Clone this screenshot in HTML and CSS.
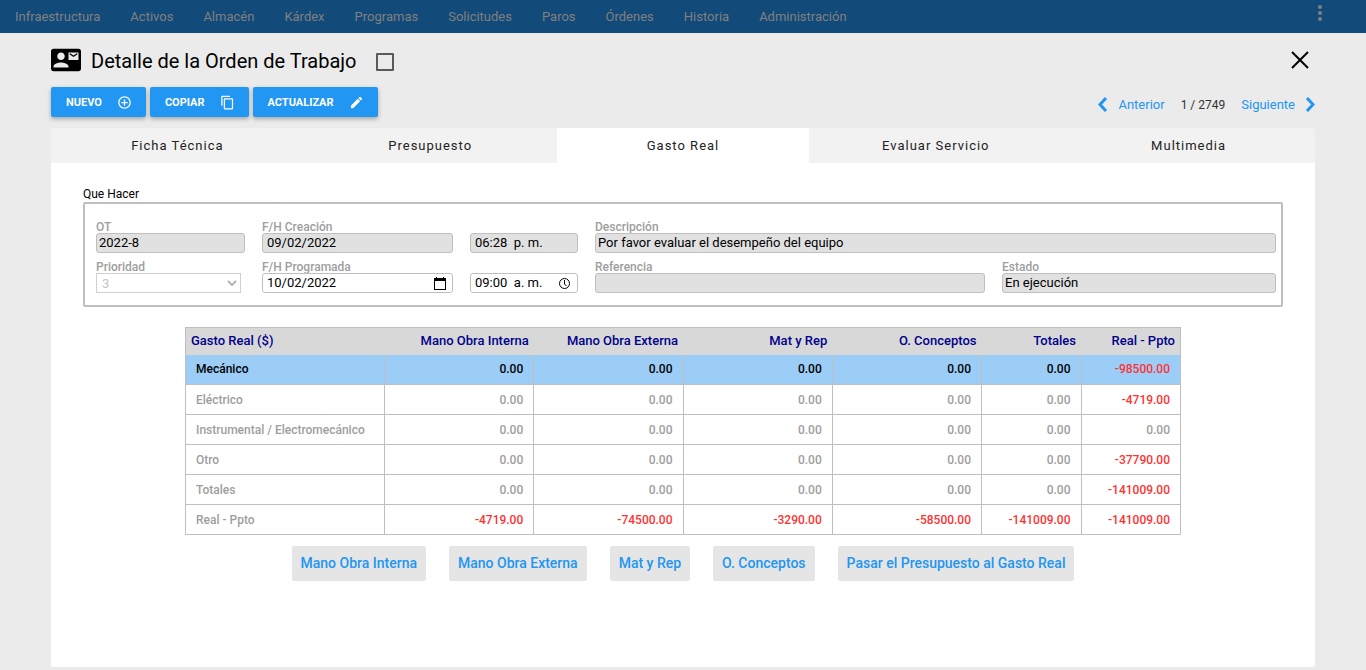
FILE: index.html
```html
<!DOCTYPE html>
<html lang="es">
<head>
    <meta charset="UTF-8">
    <meta name="viewport" content="width=device-width, initial-scale=1.0">
    <title>Detalle de la Orden de Trabajo</title>
    <link rel="stylesheet" href="styles.css">
</head>
<body>
    <nav class="navbar">
        <a href="#">Infraestructura</a>
        <a href="#">Activos</a>
        <a href="#">Almacén</a>
        <a href="#">Kárdex</a>
        <a href="#">Programas</a>
        <a href="#">Solicitudes</a>
        <a href="#">Paros</a>
        <a href="#">Órdenes</a>
        <a href="#">Historia</a>
        <a href="#">Administración</a>
        <button class="more" type="button" aria-label="Más opciones">
            <svg width="24" height="24" viewBox="0 0 24 24"><path d="M12 8c1.1 0 2-.9 2-2s-.9-2-2-2-2 .9-2 2 .9 2 2 2zm0 2c-1.1 0-2 .9-2 2s.9 2 2 2 2-.9 2-2-.9-2-2-2zm0 6c-1.1 0-2 .9-2 2s.9 2 2 2 2-.9 2-2-.9-2-2-2z"/></svg>
        </button>
    </nav>

    <main class="page">
        <header class="title">
            <svg width="30" height="30" viewBox="0 0 24 24"><path d="M22 3H2C.9 3 0 3.900 0 5v14c0 1.100.9 2 2 2h20c1.100 0 1.990-.9 1.990-2L24 5c0-1.100-.9-2-2-2zM8 6c1.660 0 3 1.340 3 3s-1.340 3-3 3-3-1.340-3-3 1.340-3 3-3zm6 12H2v-1c0-2 4-3.100 6-3.100s6 1.100 6 3.100v1zm8-6h-8V6h8v6z"/><path d="M15 7l3 2 3-2" fill="none" stroke="#000"/></svg>
            <h1>Detalle de la Orden de Trabajo</h1>
            <input class="check" type="checkbox" aria-label="Marcar orden">
            <button class="close" type="button" aria-label="Cerrar">
                <svg width="18" height="18" viewBox="0 0 18 18"><path d="M1 1l16 16M17 1L1 17"/></svg>
            </button>
        </header>

        <div class="toolbar">
            <button class="btn" type="button">NUEVO
                <svg width="15" height="15" viewBox="0 0 24 24"><path d="M13 7h-2v4H7v2h4v4h2v-4h4v-2h-4V7zm-1-5C6.480 2 2 6.480 2 12s4.480 10 10 10 10-4.480 10-10S17.520 2 12 2zm0 18c-4.410 0-8-3.590-8-8s3.590-8 8-8 8 3.590 8 8-3.590 8-8 8z"/></svg>
            </button>
            <button class="btn" type="button">COPIAR
                <svg width="15" height="15" viewBox="0 0 24 24"><path d="M16 1H4c-1.100 0-2 .9-2 2v14h2V3h12V1zm3 4H8c-1.100 0-2 .9-2 2v14c0 1.100.9 2 2 2h11c1.100 0 2-.9 2-2V7c0-1.100-.9-2-2-2zm0 16H8V7h11v14z"/></svg>
            </button>
            <button class="btn" type="button">ACTUALIZAR
                <svg width="15" height="15" viewBox="0 0 24 24"><path d="M3 17.250V21h3.750L17.810 9.940l-3.750-3.750L3 17.250zM20.710 7.040c.39-.39.39-1.020 0-1.410l-2.340-2.340c-.39-.39-1.020-.39-1.410 0l-1.830 1.830 3.750 3.750 1.830-1.830z"/></svg>
            </button>
            <div class="pager">
                <a href="#">
                    <svg width="10" height="15" viewBox="0 0 10 15"><path d="M8 1L2 7.500L8 14"/></svg>
                    Anterior
                </a>
                <span>1 / 2749</span>
                <a href="#">
                    Siguiente
                    <svg width="10" height="15" viewBox="0 0 10 15"><path d="M2 1L8 7.500L2 14"/></svg>
                </a>
            </div>
        </div>

        <div class="tabs" role="tablist">
            <button type="button" role="tab">Ficha Técnica</button>
            <button type="button" role="tab">Presupuesto</button>
            <button class="on" type="button" role="tab" aria-selected="true">Gasto Real</button>
            <button type="button" role="tab">Evaluar Servicio</button>
            <button type="button" role="tab">Multimedia</button>
        </div>

        <section class="panel">
            <h2>Que Hacer</h2>
            <form class="fields">
                <div class="field">
                    <label for="ot">OT</label>
                    <input id="ot" type="text" value="2022-8" readonly>
                </div>
                <div class="field picker">
                    <label for="fecha_creacion">F/H Creación</label>
                    <input id="fecha_creacion" type="text" value="09/02/2022" readonly>
                </div>
                <div class="field picker">
                    <input type="text" value="06:28  p. m." aria-label="Hora de creación" readonly>
                </div>
                <div class="field wide">
                    <label for="descripcion">Descripción</label>
                    <input id="descripcion" type="text" value="Por favor evaluar el desempeño del equipo" readonly>
                </div>
                <div class="field">
                    <label for="prioridad">Prioridad</label>
                    <div class="select">
                        <select id="prioridad" disabled>
                            <option>3</option>
                        </select>
                        <svg width="10" height="6" viewBox="0 0 10 6"><path d="M1 1l4 4 4-4"/></svg>
                    </div>
                </div>
                <div class="field picker">
                    <label for="fecha_programada">F/H Programada</label>
                    <div class="box">
                        <input id="fecha_programada" type="text" value="10/02/2022">
                        <button type="button" aria-label="Elegir fecha">
                            <svg width="12" height="13" viewBox="0 0 12 13"><path d="M2 0h1v1h6V0h1v1h2v12H0V1h2zM1 4v8h10V4z" fill-rule="evenodd"/></svg>
                        </button>
                    </div>
                </div>
                <div class="field picker">
                    <div class="box">
                        <input type="text" value="09:00  a. m." aria-label="Hora programada">
                        <button type="button" aria-label="Elegir hora">
                            <svg class="clock" width="13" height="13" viewBox="0 0 13 13"><circle cx="6.500" cy="6.500" r="5"/><path d="M6.500 3v4l2 2"/></svg>
                        </button>
                    </div>
                </div>
                <div class="field">
                    <label for="referencia">Referencia</label>
                    <input id="referencia" type="text" readonly>
                </div>
                <div class="field">
                    <label for="estado">Estado</label>
                    <input id="estado" type="text" value="En ejecución" readonly>
                </div>
            </form>

            <table class="costs">
                <colgroup>
                    <col class="name">
                    <col class="cost">
                    <col class="cost">
                    <col class="cost">
                    <col class="cost">
                    <col class="total">
                    <col class="total">
                </colgroup>
                <thead>
                    <tr><th>Gasto Real ($)</th><th>Mano Obra Interna</th><th>Mano Obra Externa</th><th>Mat y Rep</th><th>O. Conceptos</th><th>Totales</th><th>Real - Ppto</th></tr>
                </thead>
                <tbody>
                    <tr class="selected"><td>Mecánico</td><td>0.00</td><td>0.00</td><td>0.00</td><td>0.00</td><td>0.00</td><td class="neg">-98500.00</td></tr>
                    <tr><td>Eléctrico</td><td>0.00</td><td>0.00</td><td>0.00</td><td>0.00</td><td>0.00</td><td class="neg">-4719.00</td></tr>
                    <tr><td>Instrumental / Electromecánico</td><td>0.00</td><td>0.00</td><td>0.00</td><td>0.00</td><td>0.00</td><td>0.00</td></tr>
                    <tr><td>Otro</td><td>0.00</td><td>0.00</td><td>0.00</td><td>0.00</td><td>0.00</td><td class="neg">-37790.00</td></tr>
                    <tr><td>Totales</td><td>0.00</td><td>0.00</td><td>0.00</td><td>0.00</td><td>0.00</td><td class="neg">-141009.00</td></tr>
                    <tr><td>Real - Ppto</td><td class="neg">-4719.00</td><td class="neg">-74500.00</td><td class="neg">-3290.00</td><td class="neg">-58500.00</td><td class="neg">-141009.00</td><td class="neg">-141009.00</td></tr>
                </tbody>
            </table>

            <div class="actions">
                <button type="button">Mano Obra Interna</button>
                <button type="button">Mano Obra Externa</button>
                <button type="button">Mat y Rep</button>
                <button type="button">O. Conceptos</button>
                <button type="button">Pasar el Presupuesto al Gasto Real</button>
            </div>
        </section>
    </main>
</body>
</html>
```
FILE: styles.css
```css
* {
    margin: 0;
    padding: 0;
    box-sizing: border-box;
}
body {
    display: flex;
    flex-direction: column;
    min-height: 100vh;
    background-color: #ebebeb;
    color: #000;
    font-family: Roboto, "Liberation Sans", sans-serif;
    font-size: 13px;
}
a {
    text-decoration: none;
}
button {
    border: none;
    background: none;
    font-family: inherit;
    cursor: pointer;
}
svg {
    display: block;
    flex: none;
}

/* barra superior */
.navbar {
    display: flex;
    align-items: center;
    gap: 30px;
    height: 33px;
    padding: 0 34px 0 15px;
    background-color: #124a79;
}
.navbar a {
    color: #808080;
}
.navbar .more {
    margin-left: auto;
    padding-bottom: 7px;
    fill: #808080;
}

.page {
    display: flex;
    flex: 1;
    flex-direction: column;
    padding: 10px 51px 3px;
}
.title {
    display: flex;
    align-items: center;
    height: 34px;
}
.title h1 {
    margin: 2px 20px 0 10px;
    font-size: 20px;
    font-weight: 400;
}
.title .check {
    appearance: none;
    width: 18px;
    height: 18px;
    margin-top: 4px;
    border: 2px solid #5a5a5a;
    border-radius: 1px;
}
.title .close {
    margin: 0 6px 0 auto;
}
.close svg {
    fill: none;
    stroke: #000;
    stroke-width: 2;
}

/* botones y paginador */
.toolbar {
    display: flex;
    gap: 4px;
    margin: 10px 0 11px;
}
.btn {
    display: flex;
    align-items: center;
    gap: 15px;
    height: 30px;
    padding: 0 14px 0 15px;
    border-radius: 2px;
    background-color: #2196f3;
    box-shadow: 0 2px 4px rgba(0,0,0,0.3);
    color: #fff;
    font-size: 11px;
    font-weight: 700;
}
.btn svg {
    fill: #fff;
}
.pager {
    display: flex;
    align-items: center;
    gap: 16px;
    margin-left: auto;
    padding-top: 5px;
    color: #333;
}
.pager span {
    font-size: 12px;
}
.pager a {
    display: flex;
    align-items: center;
    gap: 10px;
    color: #2196f3;
}
.pager svg {
    fill: none;
    stroke: #2196f3;
    stroke-width: 3;
}

.tabs {
    display: flex;
    overflow: hidden;
    border-radius: 3px 3px 0 0;
    background-color: #f2f2f2;
}
.tabs button {
    flex: 1;
    height: 35px;
    color: #222;
    font-size: 13px;
    letter-spacing: 1px;
}
.tabs .on {
    background-color: #fff;
}

.panel {
    flex: 1;
    padding: 23px 32px;
    border-radius: 0 0 3px 3px;
    background-color: #fff;
}
.panel h2 {
    font-size: 12px;
    font-weight: 400;
    line-height: 16px;
}
.fields {
    display: grid;
    grid-template-columns: 149fr 191fr 108fr 390fr 274fr;
    align-items: end;
    gap: 8px 17px;
    padding: 17px 5px 12px 11px;
    border: 2px solid #bfbfbf;
    border-radius: 2px;
}
.field {
    display: flex;
    flex-direction: column;
    min-width: 0;
}
.wide {
    grid-column: span 2;
}
.field label {
    color: #9e9e9e;
    font-size: 12px;
    font-weight: 500;
    line-height: 12px;
}
.field input,
.field select,
.box {
    width: 100%;
    height: 20px;
    border: 1px solid #bfbfbf;
    border-radius: 3px;
    background-color: #fff;
    color: #000;
    font-family: inherit;
    font-size: 13px;
}
.field input {
    padding: 0 2px 2px;
    white-space: pre;
}
.picker input {
    padding: 0 4px 2px;
}
.field input:read-only {
    background-color: #e1e1e1;
}
.box {
    display: flex;
    align-items: center;
    padding-right: 6px;
}
.box input {
    height: 18px;
    border: none;
}
.box .clock {
    fill: none;
    stroke: #000;
}
.select {
    display: grid;
    align-items: center;
    margin-right: 4px;
}
.select select,
.select svg {
    grid-area: 1 / 1;
}
.select select {
    appearance: none;
    padding: 0 5px;
    border-color: #d0d0d0;
    border-radius: 0;
    color: #c4c4c4;
    opacity: 1;
}
.select svg {
    justify-self: end;
    margin-right: 4px;
    fill: none;
    stroke: #b5b5b5;
    stroke-width: 2;
}

/* tabla de gastos */
.costs {
    width: 83%;
    margin: 20px auto 11px;
    border: 1px solid #bfbfbf;
    border-collapse: collapse;
    table-layout: fixed;
    color: #9e9e9e;
    font-size: 12px;
    font-weight: 500;
}
.costs .name {
    width: 20%;
}
.costs .cost {
    width: 15%;
}
.costs .total {
    width: 10%;
}
.costs th {
    height: 27px;
    padding: 0 5px 2px;
    background-color: #d8d8d8;
    color: #00008b;
    font-size: 13px;
    font-weight: 500;
    text-align: right;
}
.costs td {
    height: 30px;
    padding: 0 10px;
    border: 1px solid #bfbfbf;
    border-top: none;
    text-align: right;
}
.costs th:first-child,
.costs td:first-child {
    text-align: left;
}
.costs .selected {
    background-color: #9bcdf7;
    color: #000;
}
.costs .neg {
    color: #ff3333;
}

.actions {
    display: flex;
    justify-content: center;
    gap: 23px;
}
.actions button {
    height: 35px;
    padding: 0 9px 2px;
    border-radius: 2px;
    background-color: #e5e5e5;
    color: #2196f3;
    font-size: 14px;
    font-weight: 500;
}
```
